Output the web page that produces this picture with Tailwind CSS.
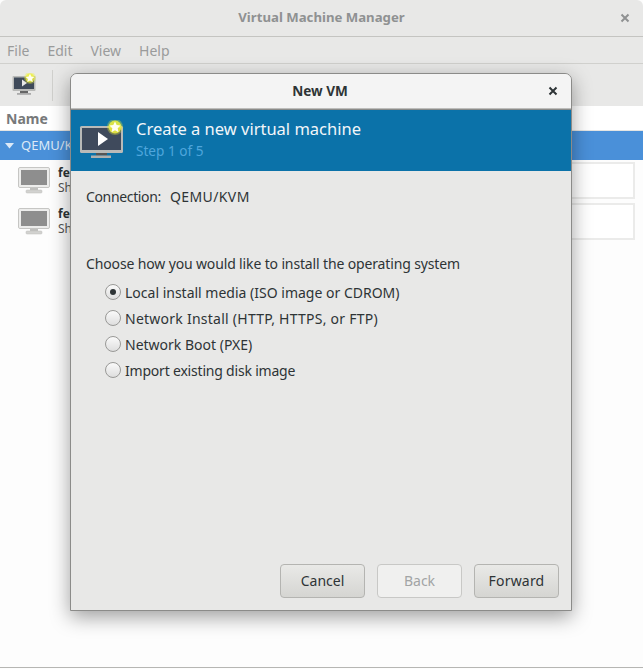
<!DOCTYPE html>
<html><head><meta charset="utf-8"><script src="https://cdn.jsdelivr.net/npm/@tailwindcss/browser@4"></script></head>
<body class="m-0 bg-white">
<div class="relative w-[643px] h-[669px] overflow-hidden bg-[#fdfdfd] font-['Noto_Sans',sans-serif] text-[14px] text-[#2e3436]">
  <div class="flex flex-col h-[668px] border-b border-[#b6b6b3]">
    <header class="h-[37px] shrink-0 flex items-center justify-center relative bg-[#e8e8e7] border-b border-[#c4c4c1] rounded-t-[6px] text-[#8f9192] font-bold text-[13.2px]">
      <span>Virtual Machine Manager</span>
      <svg class="absolute left-[620px] top-[13px]" width="10" height="10" viewBox="0 0 10 10"><path d="M1.5 1.5l7 7M8.5 1.5l-7 7" stroke="#8f9192" stroke-width="2"/></svg>
    </header>
    <nav class="h-[27px] shrink-0 flex items-center gap-[18px] pl-[7px] bg-[#e8e8e7] border-b border-[#d0d0cd] text-[#9a9b9b]">
      <span>File</span><span>Edit</span><span>View</span><span>Help</span>
    </nav>
    <div class="h-[42px] shrink-0 flex items-center bg-[#e8e8e7] pl-[12px]">
      <svg width="24" height="24" viewBox="0 0 24 24">
        <rect x="0.5" y="3" width="23" height="15" rx="1" fill="#b9bab8"/><rect x="2" y="4.5" width="20" height="11.5" fill="#3f4a5a"/>
        <path d="M10 6.5l5 3.5-5 3.5z" fill="#e8e8e8"/><rect x="8" y="18" width="8" height="2" fill="#666"/><rect x="5" y="20" width="14" height="1.8" fill="#aaa"/>
        <circle cx="18" cy="5" r="6" fill="#eef03c" opacity=".35"/><circle cx="18" cy="5" r="4.5" fill="#eef03c" opacity=".8"/><path d="M18 0.8l1.3 2.7 3 .4-2.2 2 .6 3-2.7-1.5-2.7 1.5.6-3-2.2-2 3-.4z" fill="#fffef0"/>
      </svg>
      <div class="w-px h-[31px] bg-[#d0d0cd] ml-[16px]"></div>
    </div>
    <main class="flex-1 bg-[#fdfdfd]">
      <div class="h-[25px] flex items-center pl-[6px] font-bold text-[#77797a] border-b border-[#e5e5e3] bg-white">Name</div>
      <div class="h-[29px] flex items-center bg-[#4a90d9] text-[#dce9f7] pl-[5px] gap-[7px]">
        <svg width="9" height="6" viewBox="0 0 9 6"><path d="M0 0h9L4.5 5.5z" fill="#dce9f7"/></svg><span class="text-[13px]">QEMU/KVM</span>
      </div>
      <div class="flex flex-col">
        <div class="h-[41px] flex items-center pl-[18px] gap-[8px]">
          <svg width="32" height="27" viewBox="0 0 32 27"><rect x="0.5" y="0.5" width="31" height="20" rx="1.5" fill="#ededec" stroke="#c6c6c4"/><rect x="3" y="3" width="26" height="15" fill="#8e8e8e"/><rect x="12" y="21" width="8" height="2" fill="#c0c0be"/><rect x="8" y="23" width="16" height="3" rx="1" fill="#d2d2d0" stroke="#bdbdbb" stroke-width=".5"/></svg>
          <div class="flex-1 flex flex-col leading-[15px] text-[12px] mt-[-1px]"><span class="font-bold text-[#2e3436]">fedora</span><span class="text-[#555]">Shutoff</span></div>
          <div class="w-[65px] h-[37px] mr-[8px] bg-white border-2 border-[#ebebea]"></div>
        </div>
        <div class="h-[41px] flex items-center pl-[18px] gap-[8px]">
          <svg width="32" height="27" viewBox="0 0 32 27"><rect x="0.5" y="0.5" width="31" height="20" rx="1.5" fill="#ededec" stroke="#c6c6c4"/><rect x="3" y="3" width="26" height="15" fill="#8e8e8e"/><rect x="12" y="21" width="8" height="2" fill="#c0c0be"/><rect x="8" y="23" width="16" height="3" rx="1" fill="#d2d2d0" stroke="#bdbdbb" stroke-width=".5"/></svg>
          <div class="flex-1 flex flex-col leading-[15px] text-[12px] mt-[-1px]"><span class="font-bold text-[#2e3436]">fedora</span><span class="text-[#555]">Shutoff</span></div>
          <div class="w-[65px] h-[37px] mr-[8px] bg-white border-2 border-[#ebebea]"></div>
        </div>
      </div>
    </main>
  </div>

  <section class="absolute left-[70px] top-[73px] w-[502px] h-[538px] flex flex-col bg-[#e8e8e7] border border-[#8b8b89] rounded-t-[7px] shadow-[0_6px_20px_rgba(0,0,0,0.38)]">
    <div class="h-[35px] shrink-0 flex items-center justify-center relative bg-[#f4f4f4] rounded-t-[6px] border-b border-[#bdbdbb] font-bold text-[#2e3436]">
      <span class="text-[13.6px] pr-[2px]">New VM</span>
      <svg class="absolute left-[477px] top-[12px]" width="10" height="10" viewBox="0 0 10 10"><path d="M1.5 1.5l7 7M8.5 1.5l-7 7" stroke="#2e3436" stroke-width="2"/></svg>
    </div>
    <div class="h-[62px] shrink-0 flex items-center bg-[#0b72a9] border-t border-[#8b8b89] border-b-[#9ab4c2] pl-[8px] gap-[11px]">
      <svg width="46" height="38" viewBox="0 0 46 38" class="mt-[-3px]">
        <rect x="1" y="6" width="43" height="27" rx="1.5" fill="#b9bab8"/><rect x="3" y="8" width="39" height="22" fill="#3f4a5c"/>
        <path d="M19 12l10 7-10 7z" fill="#fff"/><rect x="17" y="33" width="11" height="2.5" fill="#555"/><rect x="12" y="35.5" width="20" height="2.5" fill="#b0b0ae"/>
        <circle cx="36" cy="7" r="8" fill="#e6ea3c" opacity=".35"/><circle cx="36" cy="7" r="6.5" fill="#eef03c" opacity=".85"/><path d="M36 1.5l1.7 3.6 3.9.5-2.9 2.7.8 3.9-3.5-2-3.5 2 .8-3.9-2.9-2.7 3.9-.5z" fill="#fffef0"/>
      </svg>
      <div class="flex flex-col mt-[-3px]">
        <span class="text-[16.5px] leading-[24px] text-[#f2f6f9]">Create a new virtual machine</span>
        <span class="text-[13.6px] leading-[20px] text-[#4fa6dc]">Step 1 of 5</span>
      </div>
    </div>
    <div class="flex-1 flex flex-col pl-[15px] text-[#2e3436]">
      <p class="mt-[16px] leading-[20px] flex gap-[9px]"><span class="tracking-[-0.35px]">Connection:</span><span class="tracking-[0.4px]">QEMU/KVM</span></p>
      <p class="mt-[47px] leading-[20px] tracking-[-0.14px]">Choose how you would like to install the operating system</p>
      <div class="mt-[5px] pl-[19px] flex flex-col">
        <label class="h-[26px] flex items-center gap-[4px]"><span class="w-[16px] h-[16px] rounded-full border border-[#999997] bg-[linear-gradient(#fafafa,#dedede)] flex items-center justify-center"><span class="w-[6px] h-[6px] rounded-full bg-[#2e3436]"></span></span>Local install media (ISO image or CDROM)</label>
        <label class="h-[26px] flex items-center gap-[4px]"><span class="w-[16px] h-[16px] rounded-full border border-[#999997] bg-[linear-gradient(#fafafa,#dedede)]"></span><span class="tracking-[0.25px]">Network Install (HTTP, HTTPS, or FTP)</span></label>
        <label class="h-[26px] flex items-center gap-[4px]"><span class="w-[16px] h-[16px] rounded-full border border-[#999997] bg-[linear-gradient(#fafafa,#dedede)]"></span>Network Boot (PXE)</label>
        <label class="h-[26px] flex items-center gap-[4px]"><span class="w-[16px] h-[16px] rounded-full border border-[#999997] bg-[linear-gradient(#fafafa,#dedede)]"></span><span class="tracking-[-0.2px]">Import existing disk image</span></label>
      </div>
      <div class="mt-auto mb-[12px] mr-[12px] flex justify-end gap-[12px]">
        <button class="w-[85px] h-[34px] pb-[2px] rounded-[4px] border border-[#b4b4b1] bg-[linear-gradient(#e9e9e7,#d5d5d2)]">Cancel</button>
        <button class="w-[85px] h-[34px] pb-[2px] rounded-[4px] border border-[#c8c8c6] bg-[#f0f0ef] text-[#a2a4a5]">Back</button>
        <button class="w-[85px] h-[34px] pb-[2px] rounded-[4px] border border-[#b4b4b1] bg-[linear-gradient(#e9e9e7,#d5d5d2)] tracking-[0.2px]">Forward</button>
      </div>
    </div>
  </section>
</div>
</body></html>
